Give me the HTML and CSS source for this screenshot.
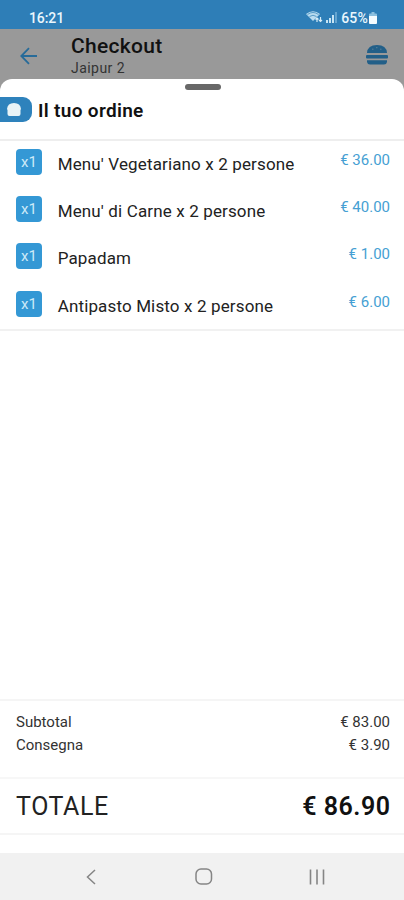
FILE: index.html
```html
<!DOCTYPE html>
<html lang="it">
<head>
<meta charset="utf-8">
<title>Checkout</title>
<link rel="stylesheet" href="styles.css">
</head>
<body>
<div class="screen">
  <div class="status">
    <span class="clock">16:21</span>
    <div class="indicators">
      <svg class="wifi" width="17" height="14" viewBox="0 0 17 14"><path d="M0 4Q7 -1.500 14 4L7 11Z" fill="#b9dcf0"/><path d="M1.500 4.500Q7 .5 12.500 4.500M3.500 6.500Q7 4 10.500 6.500" fill="none" stroke="#4b93c2" stroke-width=".9"/><path d="M11 12V8M9.500 9.500L11 8L12.500 9.500M14.500 7V11.500M13 10L14.500 11.500L16 10" fill="none" stroke="#d6edf8" stroke-width="1.200"/></svg>
      <svg class="signal" width="12" height="12" viewBox="0 0 12 12"><path d="M0 9H2V12H0ZM3 7H5V12H3ZM6 4H8V12H6Z" fill="#c6e4f4"/><path d="M9 1H11V12H9Z" fill="#65a5d0"/></svg>
      <span class="percent">65%</span>
      <svg class="battery" width="8" height="12" viewBox="0 0 8 12"><path d="M2.500 0H5.500V1.500H7Q8 1.500 8 2.500V4H0V2.500Q0 1.500 1 1.500H2.500Z" fill="#8cc0df"/><path d="M0 4H8V11Q8 12 7 12H1Q0 12 0 11Z" fill="#f5fcff"/></svg>
    </div>
  </div>
  <header class="appbar">
    <svg class="back" width="18" height="18" viewBox="0 0 18 18"><path d="M17 9H1.500M9 1.200L1.300 9L9 16.800" fill="none" stroke="#276b99" stroke-width="1.800"/></svg>
    <div class="heading"><h1>Checkout</h1><p>Jaipur 2</p></div>
    <svg class="burger" width="22" height="20" viewBox="0 0 22 20"><path d="M1 8Q1.500 0 11 0Q20.500 0 21 8Z" fill="#225f88"/><path d="M6 4.200H7.500M10 2.700H11.500M14 4.200H15.500" stroke="#5a7f96"/><rect y="10" width="22" height="3.600" rx="1" fill="#225f88"/><path d="M1 15.300H21V17Q20.500 19.500 18 19.500H4Q1.500 19.500 1 17Z" fill="#225f88"/></svg>
  </header>
  <main class="sheet">
    <div class="handle"></div>
    <div class="title">
      <span class="tag"><svg width="14" height="13" viewBox="0 0 14 13"><path d="M0 6Q.5 0 7 0Q13.500 0 14 6L13.500 7V11Q13.500 13 11.500 13H2.500Q.5 13 .5 11V7Z" fill="#e9f3f6"/></svg></span>
      <h2>Il tuo ordine</h2>
    </div>
    <ul class="items">
      <li><span class="qty">x1</span><span class="name">Menu' Vegetariano x 2 persone</span><span class="price">€ 36.00</span></li>
      <li><span class="qty">x1</span><span class="name">Menu' di Carne x 2 persone</span><span class="price">€ 40.00</span></li>
      <li><span class="qty">x1</span><span class="name">Papadam</span><span class="price">€ 1.00</span></li>
      <li><span class="qty">x1</span><span class="name">Antipasto Misto x 2 persone</span><span class="price">€ 6.00</span></li>
    </ul>
    <div class="summary">
      <div class="line"><span>Subtotal</span><span>€ 83.00</span></div>
      <div class="line"><span>Consegna</span><span>€ 3.90</span></div>
    </div>
    <div class="total"><span class="label">TOTALE</span><strong>€ 86.90</strong></div>
  </main>
  <nav class="navbar">
    <svg width="10" height="16" viewBox="0 0 10 16"><path d="M9 1L1.500 8L9 15" fill="none" stroke="#858585" stroke-width="1.500"/></svg>
    <svg class="home" width="18" height="17" viewBox="0 0 18 17"><rect x="1" y="1" width="15.500" height="15" rx="5" fill="none" stroke="#858585" stroke-width="1.500"/></svg>
    <svg width="16" height="16" viewBox="0 0 16 16"><path d="M1.500 .5V15.500M8 .5V15.500M14.500 .5V15.500" stroke="#858585" stroke-width="1.600"/></svg>
  </nav>
</div>
</body>
</html>
```
FILE: styles.css
```css
* { box-sizing: border-box; }
body { margin: 0; font-family: Roboto, sans-serif; color: #222; }
h1, h2, p, ul { margin: 0; padding: 0; }
svg { display: block; flex: none; }
.screen { width: 404px; height: 900px; display: flex; flex-direction: column; background: #999; overflow: hidden; }
.status { height: 29px; flex: none; background: #2e7eb7; color: #eaf7fd; display: flex; justify-content: space-between; padding: 9px 27px 0 29px; font-size: 14px; line-height: 18px; font-weight: 500; }
.clock { letter-spacing: -.1px; }
.indicators { display: flex; }
.wifi { margin: 1px 3px 0 0; }
.signal { margin: 2px 3px 0 0; }
.percent { letter-spacing: .2px; }
.battery { margin: 3px 0 0 1px; }
.appbar { height: 50px; flex: none; display: flex; padding: 0 16px 0 20px; }
.back { margin-top: 18px; }
.heading { margin-left: 33px; flex: 1; }
h1 { font-size: 21px; line-height: 25px; margin-top: 5px; font-weight: 500; letter-spacing: .3px; color: #111; }
.heading p { font-size: 14px; line-height: 16px; margin-top: 1px; letter-spacing: .45px; color: #333; }
.burger { margin-top: 16px; }
.sheet { flex: 1; background: #fff; border-radius: 12px 12px 0 0; display: flex; flex-direction: column; }
.handle { width: 36px; height: 6px; margin: 5px auto 0; border-radius: 3px; background: #686868; transform: translateX(1px); flex: none; }
.title { height: 51px; flex: none; display: flex; padding-top: 7px; border-bottom: 2px solid #eee; }
.tag { width: 32px; height: 25px; background: #2e82bc; border-radius: 0 9px 9px 0; display: flex; align-items: center; padding-left: 7px; }
h2 { font-size: 19px; line-height: 25px; margin-left: 6px; font-weight: 600; letter-spacing: .32px; color: #111; margin-top: 1px; }
.items { list-style: none; padding: 8px 14px 0 16px; height: 190px; border-bottom: 2px solid #f1f1f1; flex: none; }
.items li { display: flex; height: 47.200px; }
.qty { width: 26px; height: 26px; border-radius: 4px; background: #3498d5; color: #cceaf8; font-size: 15px; line-height: 26px; text-align: center; }
.name { margin: 5px 0 0 15.700px; font-size: 17px; line-height: 20px; letter-spacing: .14px; flex: 1; white-space: nowrap; }
.price { color: #469fd3; font-size: 15px; line-height: 22px; }
.summary { margin-top: auto; height: 78px; border-top: 2px solid #f5f5f5; padding: 10px 14px 0 16px; }
.line { display: flex; justify-content: space-between; font-size: 15px; line-height: 22.500px; color: #333; }
.total { height: 58px; margin-bottom: 18px; border-top: 2px solid #f7f7f7; border-bottom: 2px solid #f5f5f5; display: flex; justify-content: space-between; align-items: center; padding: 0 14px 0 16px; font-size: 25px; flex: none; }
.label { letter-spacing: .55px; }
.total strong { font-weight: 600; letter-spacing: .5px; margin-right: -.5px; color: #111; }
.navbar { height: 47px; flex: none; background: #f1f1f1; display: flex; justify-content: space-between; align-items: center; padding: 0 79px 0 86px; }
.home { margin-left: 3px; }
```
